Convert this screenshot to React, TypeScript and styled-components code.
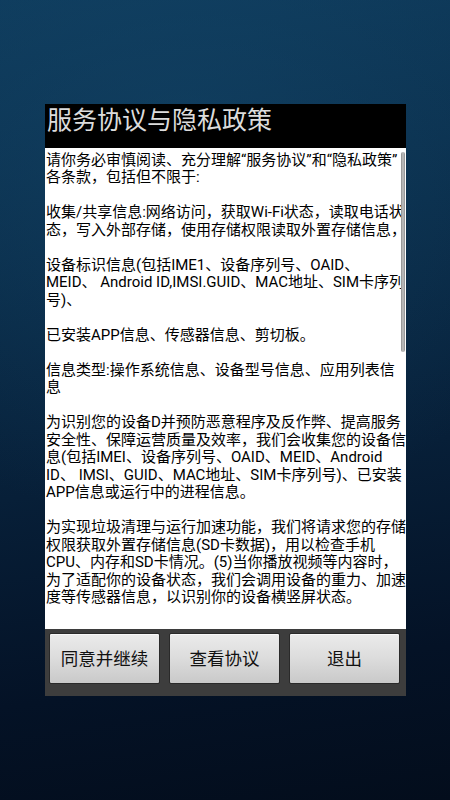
import React from "react";
import styled, { createGlobalStyle } from "styled-components";

const GlobalStyle = createGlobalStyle`
  html, body {
    margin: 0;
    padding: 0;
    width: 450px;
    height: 800px;
    overflow: hidden;
    background: #061a30;
  }
  #root {
    width: 450px;
    height: 800px;
  }
`;

const Screen = styled.div`
  width: 450px;
  height: 800px;
  box-sizing: border-box;
  padding-top: 104px;
  padding-left: 45px;
  background:
    radial-gradient(ellipse 420px 380px at 40% 18%, rgba(20, 70, 105, 0.5), rgba(20, 70, 105, 0) 100%),
    linear-gradient(172deg, #0e3b5c 0%, #0a2d4a 30%, #071f38 58%, #041226 82%, #030d1c 100%);
  font-family: Roboto, "Noto Sans CJK SC", "DejaVu Sans", sans-serif;
`;

const Dialog = styled.div`
  width: 361px;
  display: flex;
  flex-direction: column;
`;

const TitleBar = styled.div`
  height: 44px;
  box-sizing: border-box;
  padding: 2px 0 0 2px;
  background: #000;
  color: #dcdcdc;
  font-size: 25px;
  line-height: 30px;
  white-space: nowrap;
`;

const Content = styled.div`
  position: relative;
  height: 481px;
  box-sizing: border-box;
  padding: 3.5px 0 0 1px;
  background: #fff;
  overflow: hidden;
  color: #000;
  font-size: 15px;
  font-weight: 400;
  line-height: 17.5px;
`;

const Paragraph = styled.div`
  margin-bottom: 17.5px;
`;

const Line = styled.div`
  white-space: nowrap;
`;

const ScrollThumb = styled.div`
  position: absolute;
  top: 4px;
  right: 1px;
  width: 4px;
  height: 200px;
  border-radius: 2px;
  background: linear-gradient(90deg, #8c8c8c, #c4c4c4 50%, #8c8c8c);
`;

const ButtonBar = styled.div`
  display: flex;
  gap: 9px;
  padding: 4px 5px 12px 4px;
  background: #3d3d3d;
`;

const Button = styled.button`
  width: 111px;
  height: 51px;
  padding: 0;
  border: 1px solid #2a2a2a;
  border-radius: 2px;
  background: linear-gradient(180deg, #ebebeb 0%, #dcdcdc 50%, #c9c9c9 100%);
  box-shadow: inset 0 1px 0 #f8f8f8;
  color: #111;
  font-family: Roboto, "Noto Sans CJK SC", sans-serif;
  font-size: 17.5px;
  font-weight: 400;
  line-height: 51px;
`;

const paragraphs: string[][] = [
  ["请你务必审慎阅读、充分理解“服务协议”和“隐私政策”", "各条款，包括但不限于:"],
  ["收集/共享信息:网络访问，获取Wi-Fi状态，读取电话状", "态，写入外部存储，使用存储权限读取外置存储信息，"],
  ["设备标识信息(包括IME1、设备序列号、OAID、", "MEID、 Android ID,IMSI.GUID、MAC地址、SIM卡序列", "号)、"],
  ["已安装APP信息、传感器信息、剪切板。"],
  ["信息类型:操作系统信息、设备型号信息、应用列表信", "息"],
  [
    "为识别您的设备D并预防恶意程序及反作弊、提高服务",
    "安全性、保障运营质量及效率，我们会收集您的设备信",
    "息(包括IMEI、设备序列号、OAID、MEID、Android",
    "ID、 IMSI、GUID、MAC地址、SIM卡序列号)、已安装",
    "APP信息或运行中的进程信息。",
  ],
  [
    "为实现垃圾清理与运行加速功能，我们将请求您的存储",
    "权限获取外置存储信息(SD卡数据)，用以检查手机",
    "CPU、内存和SD卡情况。(5)当你播放视频等内容时，",
    "为了适配你的设备状态，我们会调用设备的重力、加速",
    "度等传感器信息，以识别你的设备横竖屏状态。",
  ],
];

export default function App() {
  return (
    <>
      <GlobalStyle />
      <Screen>
        <Dialog>
          <TitleBar>服务协议与隐私政策</TitleBar>
          <Content>
            {paragraphs.map((p, i) => (
              <Paragraph key={i}>
                {p.map((l, j) => (
                  <Line key={j}>{l}</Line>
                ))}
              </Paragraph>
            ))}
            <ScrollThumb />
          </Content>
          <ButtonBar>
            <Button>同意并继续</Button>
            <Button>查看协议</Button>
            <Button>退出</Button>
          </ButtonBar>
        </Dialog>
      </Screen>
    </>
  );
}
